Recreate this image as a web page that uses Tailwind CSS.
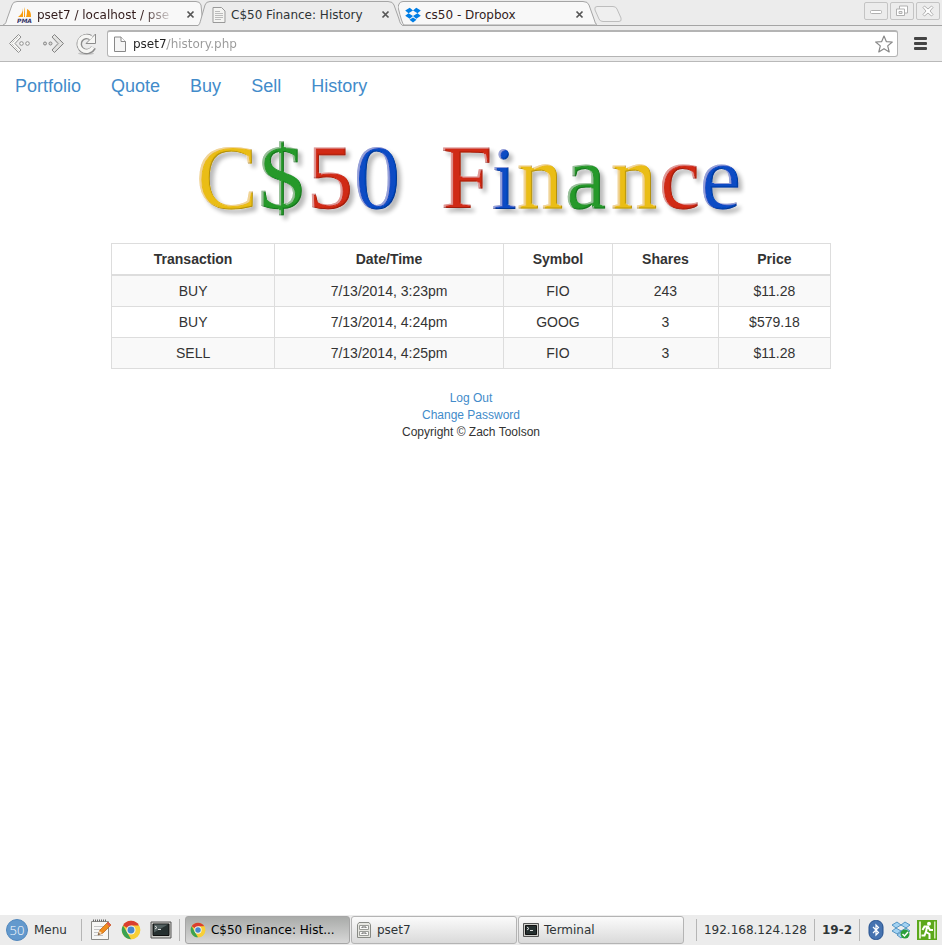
<!DOCTYPE html>
<html lang="en">
<head>
<meta charset="utf-8">
<meta name="viewport" content="width=device-width, initial-scale=1">
<title>C$50 Finance: History</title>
<script src="https://cdn.jsdelivr.net/npm/@tailwindcss/browser@4"></script>
</head>
<body class="flex min-h-screen flex-col bg-white font-['DejaVu_Sans',sans-serif] text-[12px] leading-4 text-[#2e3436]">

<header class="bg-[#ececec]">
  <!-- Tab strip -->
  <div class="flex h-[26px] items-stretch border-b border-[#a5a5a5] bg-[#ececec]">
    <div class="flex min-w-0 flex-1">
      <div class="relative ml-[3px] flex w-[200px] items-center pt-1 pr-2 pl-[14px]">
        <svg class="absolute inset-0 h-full w-full" viewBox="0 0 200 25" preserveAspectRatio="none" aria-hidden="true"><path d="M0 25C3 24 3 22 4 19L9 5Q10 1.500 14 1.500H193Q197 1.500 198 5L200 25" fill="#f8f8f8" stroke="#a5a5a5"/></svg>
        <a href="#" class="relative flex min-w-0 flex-1 items-center gap-1">
          <svg class="h-4 w-4 shrink-0" viewBox="0 0 16 16" aria-hidden="true"><path d="M6 1C6 5 4 8 1 10h5zM8 0v10H7C7 6 7 3 8 0zM10 2c4 2 4 5 4 8H9c1-3 1-5 1-8z" fill="#f89c0e"/><text x="0" y="16" font-family="DejaVu Sans" font-size="6" font-weight="700" font-style="italic" fill="#333366">PMA</text></svg>
          <span class="bg-linear-to-r from-[#321c1c] from-80% to-[#321c1c]/20 bg-clip-text text-[12px] whitespace-nowrap text-transparent">pset7 / localhost / pse</span>
        </a>
        <button aria-label="Close tab" class="relative ml-2 flex h-4 w-[9px] items-center"><svg class="h-[9px] w-[9px]" viewBox="0 0 9 9"><path d="M1.500 1.500l6 6m0-6l-6 6" stroke="#555" stroke-width="1.700"/></svg></button>
      </div>
      <div class="relative z-10 -mb-px -ml-[5px] flex w-[205px] items-center pt-1 pr-[13px] pb-px pl-[13px]">
        <svg class="absolute inset-0 h-full w-full" viewBox="0 0 205 26" preserveAspectRatio="none" aria-hidden="true"><path d="M-1 26C2 25 2 22 3 19L7 5Q8 1.500 12 1.500H190Q195 1.500 196 5L201 19Q202 25 206 26" fill="#ececec" stroke="#a5a5a5"/></svg>
        <a href="#" class="relative flex min-w-0 flex-1 items-center gap-1">
          <svg class="h-4 w-4 shrink-0" viewBox="0 0 16 16" aria-hidden="true"><path d="M2 .5h8.500L14 4v11.500H2z" fill="#f4f4f2" stroke="#999"/><path d="M4 4.500h5M4 6.500h8M4 8.500h8M4 10.500h8M4 12.500h6" stroke="#bbb"/></svg>
          <span class="whitespace-nowrap">C$50 Finance: History</span>
        </a>
        <button aria-label="Close tab" class="relative flex h-4 w-[9px] items-center"><svg class="h-[9px] w-[9px]" viewBox="0 0 9 9"><path d="M1.500 1.500l6 6m0-6l-6 6" stroke="#555" stroke-width="1.700"/></svg></button>
      </div>
      <div class="relative -ml-[5px] flex w-[199px] items-center pt-1 pr-[13px] pl-[7px]">
        <svg class="absolute inset-0 h-full w-full" viewBox="0 0 199 25" preserveAspectRatio="none" aria-hidden="true"><path d="M0 7L1 4Q2 1.500 5 1.500H185Q190 1.500 191 5L196 19Q197 25 200 25H6Q4 24 0 7" fill="#f8f8f8" stroke="#a5a5a5"/></svg>
        <a href="#" class="relative flex min-w-0 flex-1 items-center gap-1 text-[#321c1c]">
          <svg class="h-4 w-4 shrink-0" viewBox="0 0 16 16" aria-hidden="true"><path d="M4.700.8L8 3.400 3.500 6.200.2 3.600zM11.300.8L8 3.400l4.500 2.800 3.300-2.600zM.2 8.800L3.500 6.200 8 9l-3.300 2.700zM15.800 8.800l-3.300-2.600L8 9l3.300 2.700zM8 10.500l3.500 2.300L8 15.500l-3.500-2.700z" fill="#007ee5"/></svg>
          <span class="whitespace-nowrap">cs50 - Dropbox</span>
        </a>
        <button aria-label="Close tab" class="relative flex h-4 w-[9px] items-center"><svg class="h-[9px] w-[9px]" viewBox="0 0 9 9"><path d="M1.500 1.500l6 6m0-6l-6 6" stroke="#555" stroke-width="1.700"/></svg></button>
      </div>
      <button aria-label="New tab" class="mt-[5px] -ml-[3px] h-[18px] w-7"><svg class="h-[18px] w-7" viewBox="0 0 28 18"><path d="M3 1.500H19Q22 1.500 23 4L27 13Q28 16.500 25 16.500H9Q6 16.500 5 14L1 5Q0 1.500 3 1.500z" fill="#efefef" stroke="#bdbdbd"/></svg></button>
    </div>
    <div class="flex gap-[2px] pt-[2px] pr-[2px]">
      <button aria-label="Minimize" class="flex h-[18px] w-6 items-center justify-center rounded-xs border border-[#c4c4c4]"><svg class="h-3 w-3" viewBox="0 0 12 12"><rect x=".5" y="5.500" width="11" height="3" rx="1" fill="#fff" stroke="#b0b0b0"/></svg></button>
      <button aria-label="Restore" class="flex h-[18px] w-6 items-center justify-center rounded-xs border border-[#c4c4c4]"><svg class="h-3 w-3" viewBox="0 0 12 12" fill="#fff" stroke="#b0b0b0"><path d="M3.500 1h8v7h-8z"/><path d="M.5 4h8v6.500h-8z"/><path d="M3 6.500h3v2H3z" fill="#ececec"/></svg></button>
      <button aria-label="Close window" class="flex h-[18px] w-6 items-center justify-center rounded-xs border border-[#c4c4c4]"><svg class="h-3 w-3" viewBox="0 0 12 12"><path d="M1 2.500L2.500 1 6 4l3.500-3L11 2.500 8 6l3 3.500L9.500 11 6 8l-3.500 3L1 9.500 4 6z" fill="#fff" stroke="#b0b0b0"/></svg></button>
    </div>
  </div>

  <!-- Toolbar -->
  <div class="flex h-9 items-center border-b border-[#b9b9b9] pr-[15px] pl-2">
    <button aria-label="Back" class="mr-[10px] h-6 w-6"><svg class="h-6 w-6" viewBox="0 0 24 24" fill="#f8f8f6" stroke="#8e8e8e"><path d="M10.500 2.500L13 5 7 11.500l6 6.500-2.500 2.500-9-9z"/><path d="M11.500 3.500l-8 8 8 8" fill="none" stroke="#aaa" stroke-dasharray="1 1"/><circle cx="13.500" cy="11.500" r="1.800"/><circle cx="19.500" cy="11.500" r="1.800"/></svg></button>
    <button aria-label="Forward" class="mr-[10px] h-6 w-6"><svg class="h-6 w-6" viewBox="0 0 24 24" fill="#dadad8" stroke="#858585"><path d="M12.500 2.500L10 5l6 6.500-6 6.500 2.500 2.500 9-9z"/><path d="M11.500 4l7.500 7.500-7.500 7.500" fill="none" stroke="#fff" stroke-dasharray="1 1"/><circle cx="3" cy="11.500" r="1.500"/><circle cx="8.500" cy="11.500" r="1.500"/></svg></button>
    <button aria-label="Reload" class="mr-[9px] h-6 w-[22px]"><svg class="h-6 w-[22px]" viewBox="0 0 22 24"><ellipse cx="10" cy="21.500" rx="8" ry="1.500" fill="#c4c4c4"/><path d="M17.500 15.500A7.500 7.500 0 1 1 14.500 5.500" fill="none" stroke="#8c8c8c" stroke-width="5.500"/><path d="M19.500 2v9.500H10z" fill="#f6f6f4" stroke="#8c8c8c"/><path d="M17 15.300A7.500 7.500 0 1 1 15.500 6.300" fill="none" stroke="#f6f6f4" stroke-width="3.500"/></svg></button>
    <div class="flex h-[27px] min-w-0 flex-1 items-center rounded-[3px] border border-t-2 border-[#b4b4b4] bg-white px-1">
      <svg class="h-4 w-4 shrink-0" viewBox="0 0 16 16" aria-hidden="true"><path d="M2.500 1H9l4.500 4.500V15.500h-11z" fill="#f5f5f5" stroke="#888"/><path d="M9 1v4.500h4.500" fill="#fff" stroke="#888"/></svg>
      <label for="address" class="sr-only">Address</label>
      <input id="address" value="pset7/history.php" class="ml-[5px] h-5 min-w-0 flex-1 bg-linear-to-r from-[#222] from-[34px] to-[#999] to-[34px] bg-clip-text leading-5 text-transparent outline-none">
      <button aria-label="Bookmark this page" class="h-[18px] w-[18px]"><svg class="h-[18px] w-[18px]" viewBox="0 0 18 18"><path d="M9 1l2.300 5.600 6 .4-4.600 3.900 1.500 6L9 13.700 3.800 16.900l1.500-6L.700 7l6-.4z" fill="#fff" stroke="#888" stroke-width="1.200" stroke-linejoin="round"/></svg></button>
    </div>
    <button aria-label="Chrome menu" class="ml-4 flex h-[13px] w-[13px] flex-col justify-between"><span class="h-[3px] w-full rounded-[1px] bg-[#444]"></span><span class="h-[3px] w-full rounded-[1px] bg-[#444]"></span><span class="h-[3px] w-full rounded-[1px] bg-[#444]"></span></button>
  </div>
</header>

<main class="flex-1 bg-white font-['Liberation_Sans',sans-serif] text-[#333]">
  <nav class="flex gap-[30px] px-[15px] pt-[14px] text-[18px] leading-5 text-[#428bca]">
    <a href="#">Portfolio</a><a href="#">Quote</a><a href="#">Buy</a><a href="#">Sell</a><a href="#">History</a>
  </nav>

  <a href="#" class="mx-auto mt-6 block w-[550px] max-w-full">
    <svg class="block w-full" viewBox="0 -10 550 120" role="img" aria-label="C$50 Finance">
      <defs>
        <filter id="relief" x="-5%" y="-10%" width="112%" height="125%">
          <feOffset in="SourceAlpha" dx="2" dy="1" result="in1"/>
          <feComposite in="SourceAlpha" in2="in1" operator="out" result="e1"/>
          <feFlood flood-color="#fff" flood-opacity=".3"/>
          <feComposite in2="e1" operator="in" result="light"/>
          <feOffset in="SourceAlpha" dx="-1" dy="-1" result="in2"/>
          <feComposite in="SourceAlpha" in2="in2" operator="out" result="e2"/>
          <feFlood flood-color="#000" flood-opacity=".45"/>
          <feComposite in2="e2" operator="in" result="dark"/>
          <feGaussianBlur in="SourceAlpha" stdDeviation="2"/>
          <feOffset dx="4" dy="4"/>
          <feComponentTransfer result="shadow"><feFuncA type="linear" slope=".28"/></feComponentTransfer>
          <feMerge><feMergeNode in="shadow"/><feMergeNode in="SourceGraphic"/><feMergeNode in="light"/><feMergeNode in="dark"/></feMerge>
        </filter>
      </defs>
      <g font-family="Liberation Serif, serif" font-size="92" stroke-width="1" filter="url(#relief)">
        <text y="78"><tspan x="0" fill="#eabd18" stroke="#eabd18">C</tspan><tspan x="62" fill="#25992c" stroke="#25992c">$</tspan><tspan x="111" fill="#d02b18" stroke="#d02b18">5</tspan><tspan x="158" fill="#0b4cc4" stroke="#0b4cc4">0</tspan><tspan x="245" fill="#d02b18" stroke="#d02b18">F</tspan><tspan x="296" fill="#0b4cc4" stroke="#0b4cc4" font-size="88">i</tspan><tspan x="321" fill="#eabd18" stroke="#eabd18">n</tspan><tspan x="369" fill="#25992c" stroke="#25992c">a</tspan><tspan x="415" fill="#eabd18" stroke="#eabd18">n</tspan><tspan x="463" fill="#d02b18" stroke="#d02b18">c</tspan><tspan x="504" fill="#0b4cc4" stroke="#0b4cc4">e</tspan></text>
      </g>
    </svg>
  </a>

  <div class="mx-auto mt-[3px] w-full max-w-[720px]">
    <table class="w-full table-fixed border-collapse border border-[#ddd] text-center text-[14px] leading-5">
      <colgroup><col class="w-[22.700%]"><col class="w-[31.800%]"><col class="w-[15.200%]"><col class="w-[14.700%]"><col class="w-[15.600%]"></colgroup>
      <thead>
        <tr class="border-b-2 border-[#ddd] [&>th]:border-x [&>th]:border-[#ddd] [&>th]:p-[5px]"><th>Transaction</th><th>Date/Time</th><th>Symbol</th><th>Shares</th><th>Price</th></tr>
      </thead>
      <tbody class="[&_td]:border [&_td]:border-[#ddd] [&_td]:p-[5px]">
        <tr class="bg-[#f9f9f9]"><td>BUY</td><td>7/13/2014, 3:23pm</td><td>FIO</td><td>243</td><td>$11.28</td></tr>
        <tr><td>BUY</td><td>7/13/2014, 4:24pm</td><td>GOOG</td><td>3</td><td>$579.18</td></tr>
        <tr class="bg-[#f9f9f9]"><td>SELL</td><td>7/13/2014, 4:25pm</td><td>FIO</td><td>3</td><td>$11.28</td></tr>
      </tbody>
    </table>
  </div>

  <footer class="mt-[21px] flex flex-col items-center text-[12px] leading-[17px]">
    <a href="#" class="text-[#428bca]">Log Out</a>
    <a href="#" class="text-[#428bca]">Change Password</a>
    <p>Copyright © Zach Toolson</p>
  </footer>
</main>

<!-- Desktop panel -->
<div class="flex h-[30px] items-center bg-[#ececec] pr-[5px] pl-[6px]">
  <button class="flex items-center gap-[6px]">
    <svg class="h-[22px] w-[22px]" viewBox="0 0 22 22" aria-hidden="true"><circle cx="11" cy="11" r="10.500" fill="#6399cd" stroke="#5288bd"/><text x="11" y="16" text-anchor="middle" font-family="Open Sans" font-weight="300" font-size="13" fill="#fff">50</text></svg>
    <span>Menu</span>
  </button>
  <span class="ml-[14px] h-[22px] w-px bg-[#b5b5b5]"></span>
  <button aria-label="Text editor" class="ml-2"><svg class="block h-[22px] w-[22px]" viewBox="0 0 22 22"><path d="M1.500 2.500h17v18h-17z" fill="#f6f6f4" stroke="#8a8a86"/><path d="M3 1.500h14" stroke="#666" stroke-width="2" stroke-dasharray="1 1"/><path d="M4 7.500h10M4 10.500h8M4 13.500h6M4 16.500h9" stroke="#c4c4c4"/><path d="M8 16l2-5 8-8 3 3-8 8z" fill="#ef8c1c" stroke="#b45b10" stroke-width=".7"/><path d="M8 16l1.500-4 2.500 2z" fill="#f6dfb9"/><path d="M8 16l.7-2 1.300 1z" fill="#333"/><path d="M16.500 4.500l3 3L21 6l-3-3z" fill="#dc5b53"/></svg></button>
  <button aria-label="Chrome" class="ml-2"><svg class="block h-[22px] w-[22px]" viewBox="0 0 24 24"><g id="chrome"><circle cx="12" cy="12" r="10" fill="#f7cf38"/><path d="M12 12L3.300 7A10 10 0 0 1 20.700 7z" fill="#da3e30"/><path d="M3.300 7L9 17l3 5A10 10 0 0 1 3.300 7z" fill="#3ba252"/><path d="M12 7h8.700A10 10 0 0 1 12 22l4-8z" fill="#f7cf38"/><circle cx="12" cy="12" r="5" fill="#f4f4f4"/><circle cx="12" cy="12" r="3.800" fill="#4688cc"/></g></svg></button>
  <button aria-label="Terminal" class="ml-2"><svg class="block h-[22px] w-[22px]" viewBox="0 0 22 22"><path d="M1 3h20v16H1z" fill="#cfcfcb" stroke="#555"/><path d="M3 5h16v11.500H3z" fill="#263030" stroke="#111"/><path d="M4 5.500h14l-14 8z" fill="#536060"/><path d="M5 7l2 1.500L5 10M8 10.500h3" fill="none" stroke="#ddd"/></svg></button>
  <span class="mr-[5px] ml-[7px] h-[22px] w-px bg-[#b5b5b5]"></span>
  <div class="flex min-w-0 gap-px">
    <button class="flex h-7 w-[165px] items-center gap-[5px] rounded-[3px] border border-[#a6a6a6] bg-linear-to-b from-[#a9aba9] to-[#d8d8d8] px-1 text-black"><svg class="h-4 w-4 shrink-0" viewBox="1 1 22 22" aria-hidden="true"><use href="#chrome"/></svg><span class="whitespace-nowrap">C$50 Finance: Hist...</span></button>
    <button class="flex h-7 w-[166px] items-center gap-[5px] rounded-[3px] border border-[#b4b4b4] bg-linear-to-b from-[#fbfbfb] to-[#dadada] px-1"><svg class="h-4 w-4 shrink-0" viewBox="0 0 16 16" aria-hidden="true"><path d="M3 .5h10l1.500 2v13h-13v-13z" fill="#e6e6e1" stroke="#888a85"/><path d="M3.500 3.500h9v4h-9zM3.500 9.500h9v4h-9z" fill="#f8f8f6" stroke="#999b96"/><path d="M6 6V5h4v1M6 12v-1h4v1" fill="none" stroke="#666"/></svg><span>pset7</span></button>
    <button class="flex h-7 w-[166px] items-center gap-[5px] rounded-[3px] border border-[#b4b4b4] bg-linear-to-b from-[#fbfbfb] to-[#dadada] px-1"><svg class="h-4 w-4 shrink-0" viewBox="0 0 16 16" aria-hidden="true"><path d="M.5 1.500h15v13H.5z" fill="#cfcfcb" stroke="#555"/><path d="M2.500 3.500h11v9h-11z" fill="#263030" stroke="#111"/><path d="M4 5l2 1.500L4 8M7 8.500h3" fill="none" stroke="#ddd"/></svg><span>Terminal</span></button>
  </div>
  <div class="ml-auto flex items-center gap-[7px] whitespace-nowrap">
    <span class="h-[22px] w-px bg-[#b5b5b5]"></span>
    <span>192.168.124.128</span>
    <span class="h-[22px] w-px bg-[#b5b5b5]"></span>
    <span class="font-bold">19-2</span>
    <span class="h-[22px] w-px bg-[#b5b5b5]"></span>
    <div class="flex items-center gap-[7px]">
      <button aria-label="Bluetooth"><svg class="block h-5 w-[18px]" viewBox="0 0 18 20"><rect x="2" y=".5" width="14" height="19" rx="6.500" fill="#4673b0" stroke="#24508e"/><path d="M6 7l5.500 5.500L9 15V5l2.500 2.500L6 13" fill="none" stroke="#fff" stroke-width="1.200"/></svg></button>
      <button aria-label="Dropbox"><svg class="block h-5 w-[18px]" viewBox="0 0 18 20"><path d="M5 2l4 3-5 3L0 5zM13 2L9 5l5 3 4-3zM0 11l4-3 5 3-4 3zM18 11l-4-3-5 3 4 3zM9 12l4 3-4 3-4-3z" fill="#a3d2f2" stroke="#3a83b9" stroke-width=".8"/><circle cx="13" cy="14" r="4.500" fill="#2b9f3b"/><path d="M10.500 14l2 2 3.500-4" fill="none" stroke="#fff" stroke-width="1.500"/></svg></button>
      <button aria-label="Log out of desktop"><svg class="block h-5 w-5" viewBox="0 0 20 20"><path d="M0 0h20v20H0z" fill="#5ba81b"/><path d="M2 1.500h2v17H2zM17 1.500h1.500v17H17z" fill="#d5ecb9"/><circle cx="12" cy="3.800" r="2" fill="#fff"/><path d="M5.500 10l2-3.500H11l2 3.500h3M10 7l-1 5 3.500 2v5M9 11.500l-1.500 4H4.500" fill="none" stroke="#fff" stroke-width="2"/></svg></button>
    </div>
  </div>
</div>
</body>
</html>
